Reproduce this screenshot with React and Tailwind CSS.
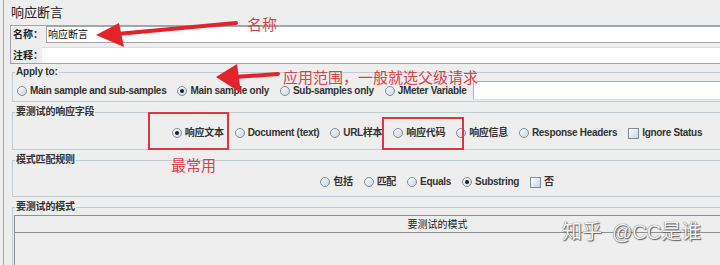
import React from "react";

function Radio({ checked }) {
  return (
    <span className="relative inline-flex items-center justify-center w-[10px] h-[10px] rounded-full border border-[#7d8c9b] bg-linear-to-br from-white to-[#c9d3de] shrink-0">
      {checked && <span className="w-[4px] h-[4px] rounded-full bg-[#1e1e1e]" />}
    </span>
  );
}

function Check() {
  return (
    <span className="inline-block w-[11px] h-[11px] border border-[#7d8c9b] bg-linear-to-br from-white to-[#c9d3de] shrink-0" />
  );
}

function Item({ type = "radio", checked, label }) {
  return (
    <span className="flex items-center gap-[3px]">
      {type === "radio" ? <Radio checked={checked} /> : <Check />}
      <span className="text-[10px] leading-[12px] font-bold tracking-[-0.3px] text-[#333] whitespace-nowrap">
        {label}
      </span>
    </span>
  );
}

function Group({ title, className, children }) {
  return (
    <div className={"relative w-[850px] border border-[#c3cbd4] " + className}>
      <span className="absolute left-[2px] top-[-7px] bg-[#eeeeee] px-[1px] text-[10px] leading-[12px] font-bold tracking-[-0.2px] text-[#333] whitespace-nowrap">
        {title}
      </span>
      {children}
    </div>
  );
}

export default function App() {
  return (
    <div className="relative w-[720px] h-[265px] overflow-hidden bg-[#eeeeee] font-['Liberation_Sans','Noto_Sans_CJK_SC',sans-serif]">
      <div className="ml-[3px] h-full border-l border-[#a4a4a4]">
        {/* title */}
        <div className="h-[25px] pl-[7px] flex items-center text-[13px] text-[#222]">响应断言</div>

        {/* name / comment panel */}
        <div className="ml-[6px] w-[900px] border border-[#9ea4aa]">
          <div className="flex h-[17px] items-center">
            <span className="w-[35px] pl-[2px] text-[10px] font-bold text-[#222] whitespace-nowrap">名称：</span>
            <div className="flex-1 h-[17px] bg-white border border-[#a4a8ac] flex items-center pl-[1px] text-[10px] text-[#111]">
              响应断言
            </div>
          </div>
          <div className="flex h-[16px] items-center mt-[4px]">
            <span className="w-[31px] pl-[2px] text-[10px] font-bold text-[#222] whitespace-nowrap">注释：</span>
            <div className="flex-1 h-[16px] bg-white border-t border-[#dcdcdc]" />
          </div>
        </div>

        {/* Apply to */}
        <div className="ml-[8px] mt-[8px]">
          <Group title="Apply to:" className="pt-[8px] pb-[1px]">
            <div className="flex items-center pl-[4px]">
              <div className="flex items-center gap-[11px]">
                <Item label="Main sample and sub-samples" />
                <Item label="Main sample only" checked />
                <Item label="Sub-samples only" />
                <Item label="JMeter Variable" />
              </div>
              <div className="ml-[6px] flex-1 h-[19px] bg-white border border-[#a9b1b9] border-b-[#d8dde2]" />
            </div>
          </Group>
        </div>

        {/* response field */}
        <div className="ml-[8px] mt-[10px]">
          <Group title="要测试的响应字段" className="pt-[14px] pb-[10px]">
            <div className="flex justify-center items-center gap-[11px] h-[12px]">
              <Item label="响应文本" checked />
              <Item label="Document (text)" />
              <Item label="URL样本" />
              <Item label="响应代码" />
              <Item label="响应信息" />
              <Item label="Response Headers" />
              <Item type="check" label="Ignore Status" />
            </div>
          </Group>
        </div>

        {/* pattern matching rules */}
        <div className="ml-[8px] mt-[10px]">
          <Group title="模式匹配规则" className="pt-[15px] pb-[8px]">
            <div className="flex justify-center items-center gap-[11px] h-[12px]">
              <Item label="包括" />
              <Item label="匹配" />
              <Item label="Equals" />
              <Item label="Substring" checked />
              <Item type="check" label="否" />
            </div>
          </Group>
        </div>

        {/* patterns to test */}
        <div className="ml-[8px] mt-[10px]">
          <Group title="要测试的模式" className="pt-[7px] pl-[1px] h-[120px]">
            <div className="border border-[#8e9296] h-[100px]">
              <div className="h-[17px] border-b border-[#8e9296] flex items-center justify-center text-[10px] text-[#222]">
                要测试的模式
              </div>
            </div>
          </Group>
        </div>
      </div>

      {/* annotations */}
      <svg className="absolute left-0 top-0 pointer-events-none" width="720" height="265" viewBox="0 0 720 265">
        <line x1="236" y1="23" x2="117" y2="34" stroke="#e2232b" strokeWidth="4" strokeLinecap="round" />
        <polygon points="96,35 119,23 124,47" fill="#e2232b" />
        <line x1="278" y1="74" x2="234" y2="77" stroke="#e2232b" strokeWidth="4" strokeLinecap="round" />
        <polygon points="216,77 237,64 241,93" fill="#e2232b" />
      </svg>

      <div className="absolute left-[148px] top-[112px] w-[81px] h-[38px] border-2 border-[#d8383f]" />
      <div className="absolute left-[382px] top-[117px] w-[82px] h-[33px] border-2 border-[#d8383f]" />

      <span className="absolute left-[247px] top-[17px] text-[15px] leading-[15px] text-[#d9414a] whitespace-nowrap">名称</span>
      <span className="absolute left-[283px] top-[70px] text-[15px] leading-[15px] text-[#d9414a] whitespace-nowrap">
        应用范围，一般就选父级请求
      </span>
      <span className="absolute left-[171px] top-[158px] text-[15px] leading-[15px] text-[#d9414a] whitespace-nowrap">最常用</span>

      <span className="absolute left-[562px] top-[220px] text-[20px] leading-[24px] text-[#f4f4f4] whitespace-nowrap [text-shadow:0_0_1px_#444,1px_1px_1px_#666]">
        知乎<span className="ml-[10px]">@CC是谁</span>
      </span>
    </div>
  );
}
